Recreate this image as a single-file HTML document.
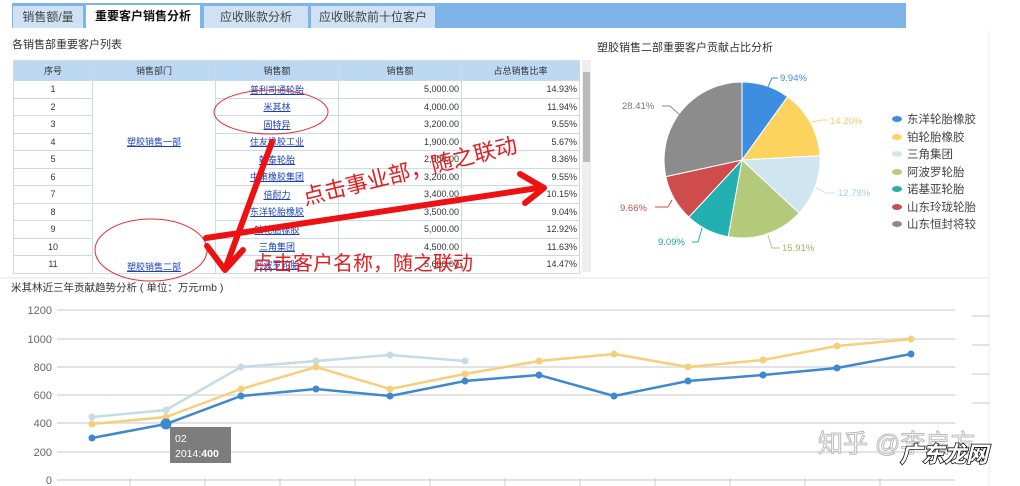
<!DOCTYPE html>
<html><head><meta charset="utf-8"><style>
body{margin:0;width:1020px;height:486px;background:#fff;position:relative;overflow:hidden;font-family:"Liberation Sans","Noto Sans CJK SC",sans-serif;}
.a{position:absolute}
table{border-collapse:collapse;font-size:9px;color:#333}
td,th{border:1px solid #c9dbe9;height:16.5px;padding:0 2px;white-space:nowrap}
th{background:#bcd8f2;font-weight:normal}
td.l{color:#1a3fbf;text-decoration:underline;text-align:center}
td.r{text-align:right}
td.c{text-align:center}
</style></head><body>
<div class="a" style="left:12px;top:3px;width:894px;height:25px;background:#7fb4e8"></div>
<div class="a" style="left:13px;top:6px;width:70px;height:22px;background:#cfe2f5;font-size:12px;color:#444;text-align:center;line-height:22px">销售额/量</div>
<div class="a" style="left:86px;top:5px;width:114px;height:24px;background:#fff;font-size:12px;color:#111;font-weight:bold;text-align:center;line-height:23px">重要客户销售分析</div>
<div class="a" style="left:204px;top:6px;width:104px;height:22px;background:#cfe2f5;font-size:12px;color:#444;text-align:center;line-height:22px">应收账款分析</div>
<div class="a" style="left:311px;top:6px;width:124px;height:22px;background:#cfe2f5;font-size:12px;color:#444;text-align:center;line-height:22px">应收账款前十位客户</div>
<div class="a" style="left:12px;top:36px;font-size:11px;color:#333">各销售部重要客户列表</div>
<table class="a" style="left:13px;top:60px;width:567px">
<tr style="height:20px"><th style="width:74px">序号</th><th style="width:118px">销售部门</th><th style="width:118px">销售额</th><th style="width:118px">销售额</th><th>占总销售比率</th></tr>
<tr><td class="c">1</td><td rowspan="7" class="l">塑胶销售一部</td><td class="l">普利司通轮胎</td><td class="r">5,000.00</td><td class="r">14.93%</td></tr>
<tr><td class="c">2</td><td class="l">米其林</td><td class="r">4,000.00</td><td class="r">11.94%</td></tr>
<tr><td class="c">3</td><td class="l">固特异</td><td class="r">3,200.00</td><td class="r">9.55%</td></tr>
<tr><td class="c">4</td><td class="l">住友橡胶工业</td><td class="r">1,900.00</td><td class="r">5.67%</td></tr>
<tr><td class="c">5</td><td class="l">韩泰轮胎</td><td class="r">2,800.00</td><td class="r">8.36%</td></tr>
<tr><td class="c">6</td><td class="l">中策橡胶集团</td><td class="r">3,200.00</td><td class="r">9.55%</td></tr>
<tr><td class="c">7</td><td class="l">倍耐力</td><td class="r">3,400.00</td><td class="r">10.15%</td></tr>
<tr><td class="c">8</td><td rowspan="4" class="l" style="vertical-align:bottom">塑胶销售二部</td><td class="l">东洋轮胎橡胶</td><td class="r">3,500.00</td><td class="r">9.04%</td></tr>
<tr><td class="c">9</td><td class="l">铂轮胎橡胶</td><td class="r">5,000.00</td><td class="r">12.92%</td></tr>
<tr><td class="c">10</td><td class="l">三角集团</td><td class="r">4,500.00</td><td class="r">11.63%</td></tr>
<tr><td class="c">11</td><td class="l">阿波罗轮胎</td><td class="r">5,600.00</td><td class="r">14.47%</td></tr>
</table>
<div class="a" style="left:582px;top:60px;width:9px;height:212px;background:#eee"></div>
<div class="a" style="left:583px;top:72px;width:7px;height:90px;background:#bbb"></div>
<div class="a" style="left:597px;top:39px;font-size:11px;color:#333">塑胶销售二部重要客户贡献占比分析</div>
<svg class="a" style="left:0;top:0" width="1020" height="486" font-family="Liberation Sans,Noto Sans CJK SC,sans-serif">
<line x1="0" y1="278" x2="990" y2="278" stroke="#e6e6e6"/>
<line x1="989" y1="30" x2="989" y2="486" stroke="#eee"/>
<g stroke="#fff" stroke-width="1">
<path d="M742 160L742 82A78 78 0 0 1 787.6 96.7Z" fill="#3d8ee0"/>
<path d="M742 160L787.6 96.7A78 78 0 0 1 819.9 155.8Z" fill="#fcd35e"/>
<path d="M742 160L819.9 155.8A78 78 0 0 1 799.1 213.1Z" fill="#cfe6f0"/>
<path d="M742 160L799.1 213.1A78 78 0 0 1 728.2 236.8Z" fill="#b4c97a"/>
<path d="M742 160L728.2 236.8A78 78 0 0 1 688.9 217.1Z" fill="#22b0b0"/>
<path d="M742 160L688.9 217.1A78 78 0 0 1 665.8 176.6Z" fill="#cf4c4c"/>
<path d="M742 160L665.8 176.6A78 78 0 0 1 742 82Z" fill="#8c8c8c"/>
</g>
<g font-size="9.5" fill="none">
<path d="M768 87L772 78L778 78" stroke="#3d8ee0"/><text x="780" y="81" fill="#3d8ee0" stroke="none">9.94%</text>
<path d="M811 122L822 120L828 120" stroke="#fcd35e"/><text x="830" y="124" fill="#f6c667" stroke="none">14.20%</text>
<path d="M816 188L826 193L835 193" stroke="#cfe6f0"/><text x="838" y="196" fill="#a8cfe0" stroke="none">12.78%</text>
<path d="M768 235L772 248L780 248" stroke="#b4c97a"/><text x="782" y="251" fill="#9fb55e" stroke="none">15.91%</text>
<path d="M702 228L698 242L692 242" stroke="#22b0b0"/><text x="658" y="245" fill="#22a0a0" stroke="none">9.09%</text>
<path d="M672 200L668 207L655 207" stroke="#cf4c4c"/><text x="620" y="211" fill="#cf4c4c" stroke="none">9.66%</text>
<path d="M680 115L670 106L662 106" stroke="#8c8c8c"/><text x="622" y="109" fill="#777" stroke="none">28.41%</text>
</g>
<g font-size="11.5" fill="#444">
<ellipse cx="897" cy="119" rx="5" ry="3" fill="#3d8ee0"/><text x="907" y="123">东洋轮胎橡胶</text>
<ellipse cx="897" cy="137" rx="5" ry="3" fill="#fcd35e"/><text x="907" y="141">铂轮胎橡胶</text>
<ellipse cx="897" cy="154" rx="5" ry="3" fill="#cfe6f0"/><text x="907" y="158">三角集团</text>
<ellipse cx="897" cy="172" rx="5" ry="3" fill="#b4c97a"/><text x="907" y="176">阿波罗轮胎</text>
<ellipse cx="897" cy="189" rx="5" ry="3" fill="#22b0b0"/><text x="907" y="193">诺基亚轮胎</text>
<ellipse cx="897" cy="207" rx="5" ry="3" fill="#cf4c4c"/><text x="907" y="211">山东玲珑轮胎</text>
<ellipse cx="897" cy="224" rx="5" ry="3" fill="#8c8c8c"/><text x="907" y="228">山东恒封将较</text>
</g>
<text x="11" y="291" font-size="10.5" fill="#333">米其林近三年贡献趋势分析 ( 单位：万元rmb )</text>
<g stroke="#e3e3e3" stroke-width="2">
<line x1="57" y1="310" x2="955" y2="310"/><line x1="57" y1="339" x2="955" y2="339"/><line x1="57" y1="367" x2="955" y2="367"/><line x1="57" y1="395" x2="955" y2="395"/><line x1="57" y1="423" x2="955" y2="423"/><line x1="57" y1="452" x2="955" y2="452"/>
<line x1="57" y1="480" x2="955" y2="480"/>
<line x1="972" y1="316" x2="990" y2="316"/><line x1="972" y1="345" x2="990" y2="345"/><line x1="972" y1="374" x2="990" y2="374"/><line x1="972" y1="403" x2="990" y2="403"/>
</g>
<g font-size="11" fill="#666" text-anchor="end">
<text x="52" y="314">1200</text><text x="52" y="343">1000</text><text x="52" y="371">800</text><text x="52" y="399">600</text><text x="52" y="427">400</text><text x="52" y="456">200</text><text x="52" y="484">0</text>
</g>
<g stroke="#ccc"><line x1="130" y1="478" x2="130" y2="486"/><line x1="205" y1="478" x2="205" y2="486"/><line x1="280" y1="478" x2="280" y2="486"/><line x1="355" y1="478" x2="355" y2="486"/><line x1="430" y1="478" x2="430" y2="486"/><line x1="505" y1="478" x2="505" y2="486"/><line x1="580" y1="478" x2="580" y2="486"/><line x1="655" y1="478" x2="655" y2="486"/><line x1="730" y1="478" x2="730" y2="486"/><line x1="805" y1="478" x2="805" y2="486"/><line x1="880" y1="478" x2="880" y2="486"/></g>
<g fill="none" stroke-width="2.5">
<polyline stroke="#c5dbe6" points="92,417 166,410 241,367 316,361 390,355 465,361"/>
<polyline stroke="#f5cf7a" points="92,424 166,417 241,389 316,367 390,389 465,374 539,361 614,354 688,367 763,360 837,346 911,339"/>
<polyline stroke="#3f88cf" points="92,438 166,424 241,396 316,389 390,396 465,381 539,375 614,396 688,381 763,375 837,368 911,354"/>
</g>
<g fill="#c5dbe6"><circle cx="92" cy="417" r="3.5"/><circle cx="166" cy="410" r="3.5"/><circle cx="241" cy="367" r="3.5"/><circle cx="316" cy="361" r="3.5"/><circle cx="390" cy="355" r="3.5"/><circle cx="465" cy="361" r="3.5"/></g>
<g fill="#f5cf7a"><circle cx="92" cy="424" r="3.5"/><circle cx="166" cy="417" r="3.5"/><circle cx="241" cy="389" r="3.5"/><circle cx="316" cy="367" r="3.5"/><circle cx="390" cy="389" r="3.5"/><circle cx="465" cy="374" r="3.5"/><circle cx="539" cy="361" r="3.5"/><circle cx="614" cy="354" r="3.5"/><circle cx="688" cy="367" r="3.5"/><circle cx="763" cy="360" r="3.5"/><circle cx="837" cy="346" r="3.5"/><circle cx="911" cy="339" r="3.5"/></g>
<g fill="#3f88cf"><circle cx="92" cy="438" r="3.5"/><circle cx="166" cy="424" r="5.5"/><circle cx="241" cy="396" r="3.5"/><circle cx="316" cy="389" r="3.5"/><circle cx="390" cy="396" r="3.5"/><circle cx="465" cy="381" r="3.5"/><circle cx="539" cy="375" r="3.5"/><circle cx="614" cy="396" r="3.5"/><circle cx="688" cy="381" r="3.5"/><circle cx="763" cy="375" r="3.5"/><circle cx="837" cy="368" r="3.5"/><circle cx="911" cy="354" r="3.5"/></g>
<rect x="170" y="427" width="61" height="36" fill="#7d7d7d"/>
<text x="175" y="442" font-size="10.5" fill="#fff">02</text>
<text x="175" y="457" font-size="10.5" fill="#fff">2014:<tspan font-weight="bold">400</tspan></text>
<text x="818" y="452" font-size="25" fill="#fff" stroke="#bbb" stroke-width="1">知乎 @李启方</text>
<text x="900" y="462" font-size="22" font-weight="bold" font-style="italic" fill="#fff" stroke="#111" stroke-width="1.6" paint-order="stroke">广东龙网</text>
<g fill="none" stroke="#d33" stroke-width="1"><ellipse cx="271" cy="112" rx="57" ry="22"/><ellipse cx="151" cy="250" rx="56" ry="31"/></g>
<g stroke="#ee1111" stroke-width="6" fill="none" stroke-linecap="round" stroke-linejoin="round">
<line x1="272" y1="142" x2="227" y2="264"/><polyline points="207,246 225,270 243,250"/>
<line x1="206" y1="238" x2="538" y2="188"/><polyline points="520,174 544,188 525,203"/>
</g>
<text x="305" y="205" font-size="22" fill="#e02020" transform="rotate(-14 305 205)">点击事业部，随之联动</text>
<text x="253" y="270" font-size="20" fill="#e02020">点击客户名称，随之联动</text>
</svg>
</body></html>
